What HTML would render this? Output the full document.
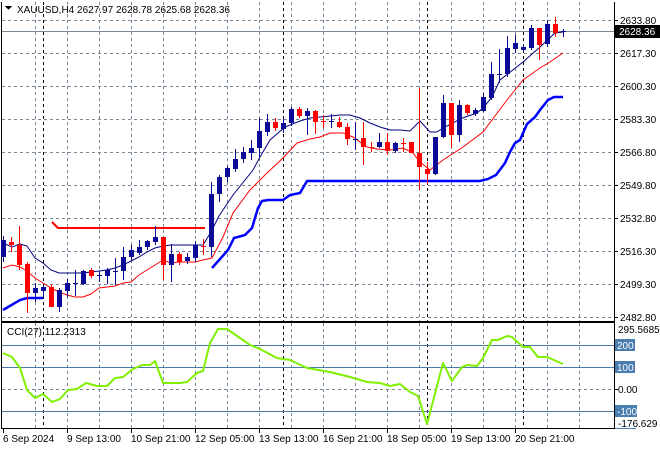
<!DOCTYPE html>
<html><head><meta charset="utf-8"><style>
html,body{margin:0;padding:0;background:#fff;}
svg{display:block;font-family:"Liberation Sans",sans-serif;font-size:10px;}
</style></head><body>
<svg width="660" height="450" viewBox="0 0 660 450" xmlns="http://www.w3.org/2000/svg" shape-rendering="crispEdges">
<rect width="660" height="450" fill="#fff"/>
<g stroke="#7a8794" stroke-width="1" stroke-dasharray="3,3" fill="none">
<path d="M35.5 2V321M67.5 2V321M99.5 2V321M131.5 2V321M163.5 2V321M195.5 2V321M227.5 2V321M259.5 2V321M291.5 2V321M323.5 2V321M355.5 2V321M387.5 2V321M419.5 2V321M451.5 2V321M483.5 2V321M515.5 2V321M547.5 2V321M579.5 2V321"/>
<path d="M2 20.5H614M2 53.5H614M2 86.5H614M2 119.5H614M2 152.5H614M2 185.5H614M2 218.5H614M2 251.5H614M2 284.5H614M2 317.5H614"/>
<path d="M35.5 323V428M67.5 323V428M99.5 323V428M131.5 323V428M163.5 323V428M195.5 323V428M227.5 323V428M259.5 323V428M291.5 323V428M323.5 323V428M355.5 323V428M387.5 323V428M419.5 323V428M451.5 323V428M483.5 323V428M515.5 323V428M547.5 323V428M579.5 323V428"/>
<path d="M2 389.5H614"/>
</g>
<g stroke="#000" stroke-dasharray="3,3">
<path d="M43.5 2V428M283.5 2V428M427.5 2V428M523.5 2V428"/>
</g>
<path d="M2 31.5H614" stroke="#7a8794"/>
<path d="M2 345.5H614M2 367.5H614M2 411.5H614" stroke="#4a78a8"/>
<path d="M1.5 2V429M614.5 2V429M1 321.5H615M1 322.5H615M1 428.5H615" stroke="#000"/>
<polyline points="52,222 58,228 205,228" fill="none" stroke="#ff0000" stroke-width="2" shape-rendering="auto"/>
<g fill="none" stroke="#0000ff" stroke-width="2.5" shape-rendering="auto">
<polyline points="3,310 20,300 27,298 43,298"/>
<polyline points="212,268 228,250 234,238 245,235 252,228 258,208 262,201 268,200 283,200 290,195 300,193 307,181 480,181 488,179 496,175 505,163 510,152 515,143 520,140 527,124 535,117 540,110 548,100 554,97 563,97"/>
</g>
<polyline fill="none" stroke="#ff0000" stroke-width="1" shape-rendering="auto" points="3,268 12,265 20,267 27,271 35,278 43,283 51,288 59,292 67,295 75,297 83,297 91,294 99,288 115,286 123,283 131,282 139,275 147,270 155,265 163,260 171,263 179,262 195,262 203,260 212,258 223,237 233,213 250,190 267,173 283,158 297,143 310,139 320,137 330,133 343,133 353,137 367,147 377,149 390,150 403,148 413,153 420,162 430,170 443,160 463,147 483,132 507,100 523,80 540,68 550,62 563,53"/>
<polyline fill="none" stroke="#00007f" stroke-width="1" shape-rendering="auto" points="3,243 12,247 20,244 27,246 35,258 43,263 51,270 59,273 67,273 83,273 99,271 107,270 115,268 123,265 131,261 139,257 147,252 155,248 163,246 171,245 203,245 211,232 219,216 233,195 253,170 260,157 270,140 285,127 300,121 310,118 320,117 340,115 350,115 360,118 370,123 380,127 390,130 400,130 410,131 420,121 430,132 437,132 443,128 453,123 460,119 468,116 477,113 483,108 492,97 500,80 523,62 540,47 555,33 563,32"/>
<g shape-rendering="crispEdges">
<g fill="#0a0a96" stroke="#0a0a96">
<path fill="none" d="M3.5 236V262M35.5 283V302M43.5 285V297M59.5 288V312M67.5 279V297M75.5 270V296M83.5 270V285M99.5 271V282M107.5 268V284M115.5 258V285M123.5 247V280M131.5 245V260M139.5 240V255M147.5 240V250M155.5 226V245M171.5 244V282M187.5 253V264M195.5 241V262M211.5 182V257M219.5 175V202M227.5 166V182M235.5 149V172M243.5 147V163M251.5 140V160M259.5 118V157M267.5 114V136M283.5 118V133M291.5 107V126M307.5 108V135M331.5 114V128M355.5 122V150M379.5 133V148M395.5 142V153M435.5 137V175M443.5 95V138M459.5 100V142M475.5 108V116M483.5 93V112M491.5 62V100M499.5 49V83M507.5 36V77M515.5 35V53M523.5 44V52M531.5 25V50M547.5 20V47M563.5 29V37"/>
<g stroke="none">
<rect x="1" y="240" width="5" height="17"/><rect x="33" y="288" width="5" height="5"/><rect x="41" y="287" width="5" height="4"/><rect x="57" y="290" width="5" height="17"/><rect x="65" y="283" width="5" height="8"/><rect x="73" y="283" width="5" height="1"/><rect x="81" y="271" width="5" height="13"/><rect x="97" y="275" width="5" height="1"/><rect x="105" y="270" width="5" height="6"/><rect x="113" y="271" width="5" height="1"/><rect x="121" y="257" width="5" height="14"/><rect x="129" y="250" width="5" height="7"/><rect x="137" y="247" width="5" height="6"/><rect x="145" y="241" width="5" height="6"/><rect x="153" y="237" width="5" height="5"/><rect x="169" y="254" width="5" height="11"/><rect x="185" y="257" width="5" height="4"/><rect x="193" y="245" width="5" height="13"/><rect x="209" y="194" width="5" height="53"/><rect x="217" y="177" width="5" height="17"/><rect x="225" y="168" width="5" height="9"/><rect x="233" y="159" width="5" height="10"/><rect x="241" y="152" width="5" height="7"/><rect x="249" y="148" width="5" height="5"/><rect x="257" y="131" width="5" height="17"/><rect x="265" y="122" width="5" height="10"/><rect x="281" y="123" width="5" height="6"/><rect x="289" y="109" width="5" height="14"/><rect x="305" y="111" width="5" height="5"/><rect x="329" y="121" width="5" height="1"/><rect x="353" y="139" width="5" height="1"/><rect x="377" y="142" width="5" height="5"/><rect x="393" y="143" width="5" height="8"/><rect x="433" y="137" width="5" height="37"/><rect x="441" y="103" width="5" height="34"/><rect x="457" y="105" width="5" height="30"/><rect x="473" y="110" width="5" height="4"/><rect x="481" y="97" width="5" height="14"/><rect x="489" y="74" width="5" height="24"/><rect x="497" y="74" width="5" height="1"/><rect x="505" y="48" width="5" height="26"/><rect x="513" y="43" width="5" height="6"/><rect x="521" y="47" width="5" height="3"/><rect x="529" y="28" width="5" height="20"/><rect x="545" y="24" width="5" height="20"/><rect x="561" y="31" width="5" height="1"/>
</g></g>
<g fill="#ff0000" stroke="#ff0000">
<path fill="none" d="M11.5 237V252M19.5 226V270M27.5 262V313M51.5 284V307M91.5 268V278M163.5 237V280M179.5 252V265M203.5 239V255M275.5 118V131M299.5 107V118M315.5 110V134M323.5 115V128M339.5 117V128M347.5 123V145M363.5 122V165M371.5 142V152M387.5 133V155M403.5 138V152M411.5 142V153M419.5 88V190M427.5 162V184M451.5 103V148M467.5 104V115M539.5 28V60M555.5 17V37"/>
<g stroke="none">
<rect x="9" y="242" width="5" height="3"/><rect x="17" y="245" width="5" height="20"/><rect x="25" y="264" width="5" height="29"/><rect x="49" y="287" width="5" height="20"/><rect x="89" y="270" width="5" height="6"/><rect x="161" y="237" width="5" height="28"/><rect x="177" y="254" width="5" height="8"/><rect x="201" y="246" width="5" height="1"/><rect x="273" y="122" width="5" height="6"/><rect x="297" y="109" width="5" height="7"/><rect x="313" y="111" width="5" height="11"/><rect x="321" y="121" width="5" height="1"/><rect x="337" y="122" width="5" height="5"/><rect x="345" y="127" width="5" height="12"/><rect x="361" y="138" width="5" height="9"/><rect x="369" y="147" width="5" height="1"/><rect x="385" y="142" width="5" height="9"/><rect x="401" y="143" width="5" height="1"/><rect x="409" y="142" width="5" height="11"/><rect x="417" y="153" width="5" height="14"/><rect x="425" y="169" width="5" height="5"/><rect x="449" y="103" width="5" height="32"/><rect x="465" y="105" width="5" height="8"/><rect x="537" y="28" width="5" height="17"/><rect x="553" y="24" width="5" height="9"/>
</g></g>
</g>
<polyline fill="none" stroke="#80f000" stroke-width="2" stroke-linejoin="round" shape-rendering="auto" points="3,353 12,357 20,368 27,390 35,398 43,394 52,402 60,399 68,390 77,389 86,383 97,386 107,386 115,378 123,377 133,369 142,365 150,365 155,361 163,383 180,383 187,382 197,373 203,371 210,343 218,329 227,329 250,345 260,349 277,358 290,360 307,368 330,372 350,377 367,382 380,383 390,386 400,384 410,392 418,396 427,424 443,363 452,381 462,367 467,365 477,366 483,358 492,340 498,340 507,336 512,337 523,347 530,347 538,357 547,357 563,364"/>
<path d="M5 6H12L8.5 10Z" fill="#000"/>
<text x="17" y="13" fill="#000">XAUUSD,H4  2627.97 2628.78 2625.68 2628.36</text>
<text x="7" y="335" fill="#000">CCI(27) 112.2313</text>
<g stroke="#000"><path d="M615 20.5H618M615 53.5H618M615 86.5H618M615 119.5H618M615 152.5H618M615 185.5H618M615 218.5H618M615 251.5H618M615 284.5H618M615 317.5H618M615 389.5H618"/></g>
<g fill="#000">
<text x="620" y="24">2633.80</text>
<text x="620" y="57">2617.30</text>
<text x="620" y="90">2600.30</text>
<text x="620" y="123">2583.30</text>
<text x="620" y="156">2566.80</text>
<text x="620" y="189">2549.80</text>
<text x="620" y="222">2532.80</text>
<text x="620" y="255">2516.30</text>
<text x="620" y="288">2499.30</text>
<text x="620" y="321">2482.80</text>
<text x="618" y="333">295.5685</text>
<text x="618" y="393">0.00</text>
<text x="618" y="427">-176.629</text>
</g>
<rect x="615" y="25" width="45" height="13" fill="#000"/>
<text x="619" y="35" fill="#fff">2628.36</text>
<rect x="615" y="339" width="20" height="12" fill="#4a7db0"/><text x="617" y="349" fill="#fff">200</text>
<rect x="615" y="361" width="20" height="12" fill="#4a7db0"/><text x="617" y="371" fill="#fff">100</text>
<rect x="615" y="405" width="22" height="12" fill="#4a7db0"/><text x="617" y="415" fill="#fff">-100</text>
<path d="M615 428.5H636" stroke="#4a7db0"/>
<g stroke="#000"><path d="M3.5 429V433M67.5 429V433M131.5 429V433M195.5 429V433M259.5 429V433M323.5 429V433M387.5 429V433M451.5 429V433M515.5 429V433"/></g>
<g fill="#000">
<text x="3" y="442">6 Sep 2024</text>
<text x="67" y="442">9 Sep 13:00</text>
<text x="131" y="442">10 Sep 21:00</text>
<text x="195" y="442">12 Sep 05:00</text>
<text x="259" y="442">13 Sep 13:00</text>
<text x="323" y="442">16 Sep 21:00</text>
<text x="387" y="442">18 Sep 05:00</text>
<text x="451" y="442">19 Sep 13:00</text>
<text x="515" y="442">20 Sep 21:00</text>
</g>
</svg>
</body></html>
